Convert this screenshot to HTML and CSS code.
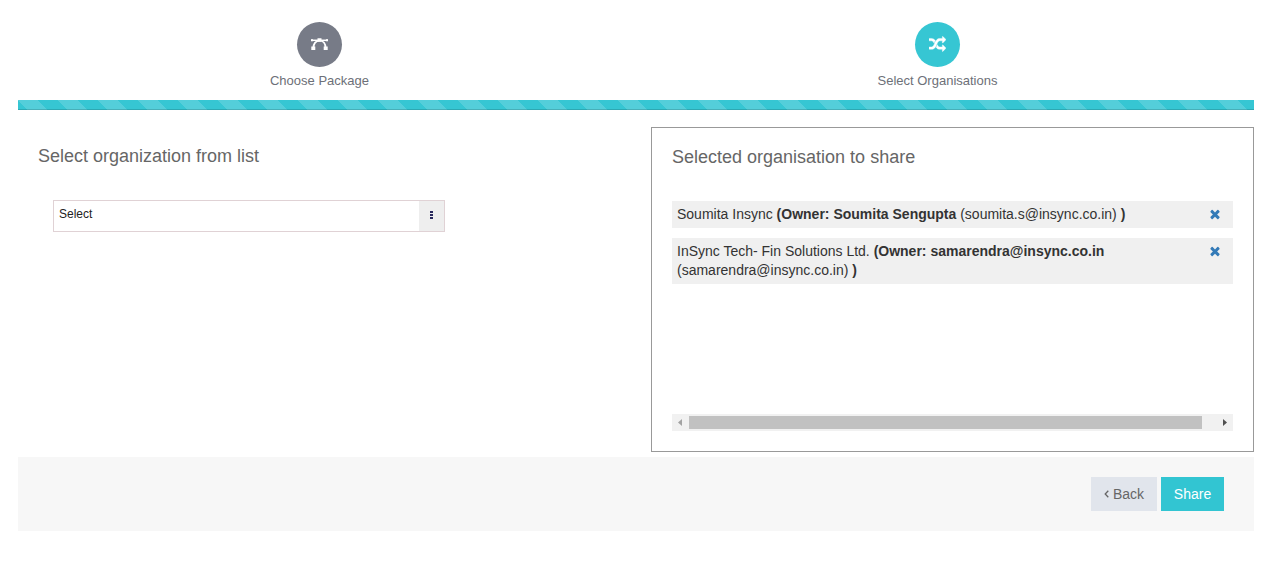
FILE: index.html
```html
<!DOCTYPE html>
<html lang="en">
<head>
<meta charset="utf-8">
<title>Share Package</title>
<link rel="stylesheet" href="styles.css">
</head>
<body>
<main class="wizard">
  <nav class="steps">
    <a class="step">
      <span class="step-icon">
        <svg width="19" height="15" viewBox="0 0 19 15" fill="none" stroke="currentColor">
          <path d="M1 3.300H18" stroke-width="1.500"/>
          <path d="M3.500 10.500C3.500 7 5.500 3.600 9.500 3.600S15.500 7 15.500 10.500" stroke-width="1.900"/>
          <path d="M7.500 1.300h4v3.400h-4zM1.300 9.500h4v3.500h-4zM13.700 9.500h4v3.500h-4zM1 2.300h2v2H1zM16 2.300h2v2h-2z" fill="currentColor" stroke="none"/>
        </svg>
      </span>
      <span class="step-label">Choose Package</span>
    </a>
    <a class="step active">
      <span class="step-icon">
        <svg width="17" height="17" viewBox="0 0 1792 1792" fill="currentColor" stroke="currentColor" stroke-width="40"><path d="M666 481q-60 92-137 273-22-45-37-72.500t-40.500-63.500-51-56.500-63-35-81.500-14.500h-224q-14 0-23-9t-9-23v-192q0-14 9-23t23-9h224q250 0 410 225zm1126 799q0 14-9 23l-320 320q-9 9-23 9-13 0-22.500-9.500t-9.500-22.500v-192q-32 0-85 .5t-81 1-73-1-71-5-64-10.500-63-18.500-58-28.500-59-40-55-53.500-56-69.500q59-93 136-273 22 45 37 72.500t40.500 63.500 51 56.500 63 35 81.500 14.500h256v-192q0-14 9-23t23-9q12 0 24 10l319 319q9 9 9 23zm0-896q0 14-9 23l-320 320q-9 9-23 9-13 0-22.500-9.500t-9.500-22.500v-192h-256q-48 0-87 15t-69 45-51 61.500-45 77.500q-32 62-78 171-29 66-49.500 111t-54 105-64 100-74 83-90 68.500-106.500 42-128 16.500h-224q-14 0-23-9t-9-23v-192q0-14 9-23t23-9h224q48 0 87-15t69-45 51-61.500 45-77.500q32-62 78-171 29-66 49.500-111t54-105 64-100 74-83 90-68.500 106.500-42 128-16.500h256v-192q0-14 9-23t23-9q12 0 24 10l319 319q9 9 9 23z"/></svg>
      </span>
      <span class="step-label">Select Organisations</span>
    </a>
  </nav>
  <div class="progress"></div>
  <div class="columns">
    <section class="picker">
      <h3 class="title">Select organization from list</h3>
      <div class="select">
        <span class="select-value">Select</span>
        <span class="select-toggle"><i class="dot"></i><i class="dot"></i><i class="dot"></i></span>
      </div>
    </section>
    <section class="selected">
      <h3 class="title">Selected organisation to share</h3>
      <div class="list">
        <div class="item">
          <p class="item-text">Soumita Insync <b>(Owner: Soumita Sengupta</b> (soumita.s@insync.co.in) <b>)</b></p>
          <svg class="remove" width="14" height="14" viewBox="0 0 1792 1792"><path d="M1490 1322q0 40-28 68l-136 136q-28 28-68 28t-68-28l-294-294-294 294q-28 28-68 28t-68-28l-136-136q-28-28-28-68t28-68l294-294-294-294q-28-28-28-68t28-68l136-136q28-28 68-28t68 28l294 294 294-294q28-28 68-28t68 28l136 136q28 28 28 68t-28 68l-294 294 294 294q28 28 28 68z"/></svg>
        </div>
        <div class="item">
          <p class="item-text">InSync Tech- Fin Solutions Ltd. <b>(Owner: samarendra@insync.co.in</b><br>(samarendra@insync.co.in) <b>)</b></p>
          <svg class="remove" width="14" height="14" viewBox="0 0 1792 1792"><path d="M1490 1322q0 40-28 68l-136 136q-28 28-68 28t-68-28l-294-294-294 294q-28 28-68 28t-68-28l-136-136q-28-28-28-68t28-68l294-294-294-294q-28-28-28-68t28-68l136-136q28-28 68-28t68 28l294 294 294-294q28-28 68-28t68 28l136 136q28 28 28 68t-28 68l-294 294 294 294q28 28 28 68z"/></svg>
        </div>
      </div>
      <div class="scrollbar">
        <svg class="arrow-left" width="17" height="17" viewBox="0 0 17 17"><path d="M10 5v7L6 8.500z"/></svg>
        <span class="thumb"></span>
        <svg class="arrow-right" width="17" height="17" viewBox="0 0 17 17"><path d="M7 5v7l4-3.500z"/></svg>
      </div>
    </section>
  </div>
  <footer class="actions">
    <button class="btn back"><svg width="5" height="8" viewBox="0 0 5 8" fill="none" stroke="currentColor" stroke-width="1.300"><path d="M4.300.8L1.200 4l3.100 3.200"/></svg>Back</button>
    <button class="btn share">Share</button>
  </footer>
</main>
</body>
</html>
```
FILE: styles.css
```css
* { box-sizing: border-box; }
body { margin: 0; background: #fff; color: #333; font: 14px/19px "Liberation Sans", Arial, sans-serif; }
.wizard { width: 1236px; margin: 0 0 0 18px; padding-top: 22px; }
.steps { display: grid; grid-template-columns: 603px 633px; height: 78px; }
.step { display: flex; flex-direction: column; align-items: center; color: #6d7078; font-size: 13px; line-height: 18px; }
.step-icon { display: flex; align-items: center; justify-content: center; width: 45px; height: 45px; margin-bottom: 5px; border-radius: 50%; background: #777b87; color: #fff; }
.active .step-icon { background: #36c6d3; }
.progress { height: 10px; background-color: #36c6d3; background-image: linear-gradient(45deg, rgba(255,255,255,.15) 25%, transparent 25%, transparent 50%, rgba(255,255,255,.15) 50%, rgba(255,255,255,.15) 75%, transparent 75%); background-size: 40px 40px; box-shadow: inset 0 -1px 0 rgba(0,0,0,.15); }
.columns { display: grid; grid-template-columns: 633px 603px; height: 347px; padding-top: 17px; }
.title { margin: 0; color: #666; font-size: 18px; font-weight: 400; line-height: 20px; }
.picker { padding: 19px 20px; }
.select { display: flex; width: 392px; height: 32px; margin: 34px 0 0 15px; border: 1px solid #e0d2d5; background: #fff; }
.select-value { flex: 1; padding: 5px; color: #222; font-size: 12px; line-height: 16px; }
.select-toggle { display: flex; flex-direction: column; align-items: center; justify-content: center; gap: 1px; width: 25px; padding-bottom: 2px; background: #eee; }
.dot { width: 3px; height: 2px; background: #28285c; }
.selected { height: 325px; padding: 19px 20px; border: 1px solid #999; }
.list { display: flex; flex-direction: column; gap: 10px; height: 246px; padding-top: 34px; }
.item { display: flex; justify-content: space-between; padding: 4px 11px 4px 5px; background: #f0f0f0; }
.item-text { margin: 0; }
.remove { margin-top: 2px; fill: #337ab7; }
.scrollbar { display: flex; align-items: center; height: 17px; margin-top: 1px; background: #f1f1f1; }
.thumb { width: 513px; height: 13px; background: #c1c1c1; }
.arrow-left { fill: #a3a3a3; }
.arrow-right { margin-left: auto; fill: #505050; }
.actions { display: flex; justify-content: flex-end; gap: 4px; height: 74px; padding: 20px 30px; background: #f7f7f7; }
.btn { display: flex; align-items: center; justify-content: center; gap: 4px; height: 34px; padding: 0; border: 0; font: 14px/20px "Liberation Sans", Arial, sans-serif; }
.back { width: 66px; background: #e1e5ec; color: #666; }
.share { width: 63px; background: #32c5d2; color: #fff; }
```
